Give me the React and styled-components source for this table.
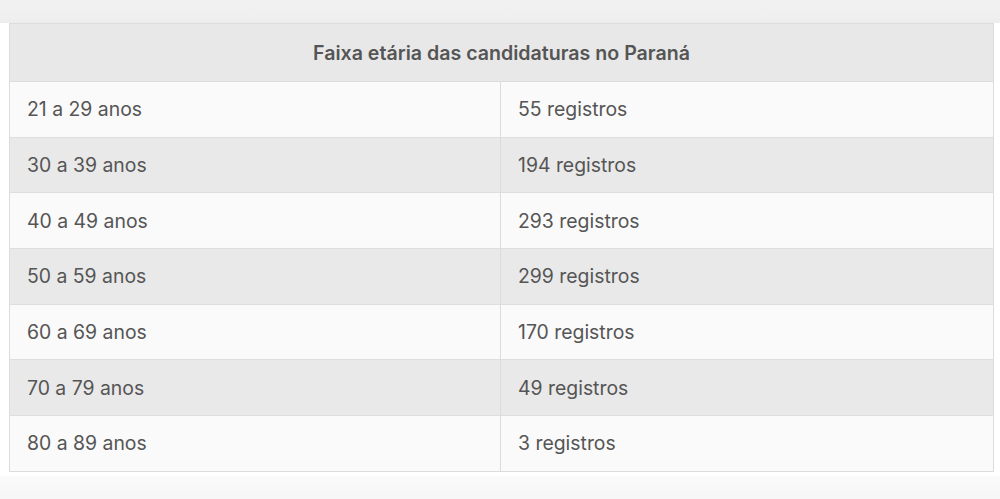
import React from "react";
import styled, { createGlobalStyle } from "styled-components";

const Global = createGlobalStyle`
  html, body { margin: 0; padding: 0; background: #ffffff; }
  body { font-family: Inter, "Noto Sans", sans-serif; }
`;

const Page = styled.div`
  width: 1000px;
  height: 499px;
  display: flex;
  flex-direction: column;
  background: #ffffff;
  overflow: hidden;
`;

const TopBand = styled.div`
  height: 23px;
  flex: none;
  background: linear-gradient(to bottom, #f1f1f1 0%, #efefef 80%, #ececec 100%);
`;

const Wrap = styled.div`
  padding: 0 6px 0 9px;
`;

const Table = styled.table`
  width: 985px;
  border-collapse: collapse;
  table-layout: fixed;
  border: 1px solid #dcdcdc;
  color: #555555;
  font-size: 19.4px;
`;

const HeadCell = styled.th`
  height: 57px;
  background: #e8e8e8;
  font-weight: 600;
  font-size: 19.6px;
  text-align: center;
  color: #555555;
  border-bottom: 1px solid #dcdcdc;
  padding: 0;
`;

const Row = styled.tr`
  background: ${(p) => (p.$alt ? "#e9e9e9" : "#fafafa")};
`;

const Cell = styled.td`
  height: 55.7px;
  padding: 0 0 0 17px;
  border-top: 1px solid #dedede;
  border-left: ${(p) => (p.$right ? "1px solid #dcdcdc" : "none")};
  box-sizing: border-box;
  vertical-align: middle;
`;

const BottomBand = styled.div`
  flex: 1;
  margin-top: 4px;
  background: linear-gradient(to bottom, #fafafa, #f6f6f6);
`;

const rows = [
  ["21 a 29 anos", "55 registros"],
  ["30 a 39 anos", "194 registros"],
  ["40 a 49 anos", "293 registros"],
  ["50 a 59 anos", "299 registros"],
  ["60 a 69 anos", "170 registros"],
  ["70 a 79 anos", "49 registros"],
  ["80 a 89 anos", "3 registros"],
];

export default function App() {
  return (
    <Page>
      <Global />
      <TopBand />
      <Wrap>
        <Table>
          <colgroup>
            <col style={{ width: 491 }} />
            <col />
          </colgroup>
          <thead>
            <tr>
              <HeadCell colSpan={2}>Faixa etária das candidaturas no Paraná</HeadCell>
            </tr>
          </thead>
          <tbody>
            {rows.map((r, i) => (
              <Row key={i} $alt={i % 2 === 1}>
                <Cell>{r[0]}</Cell>
                <Cell $right>{r[1]}</Cell>
              </Row>
            ))}
          </tbody>
        </Table>
      </Wrap>
      <BottomBand />
    </Page>
  );
}
